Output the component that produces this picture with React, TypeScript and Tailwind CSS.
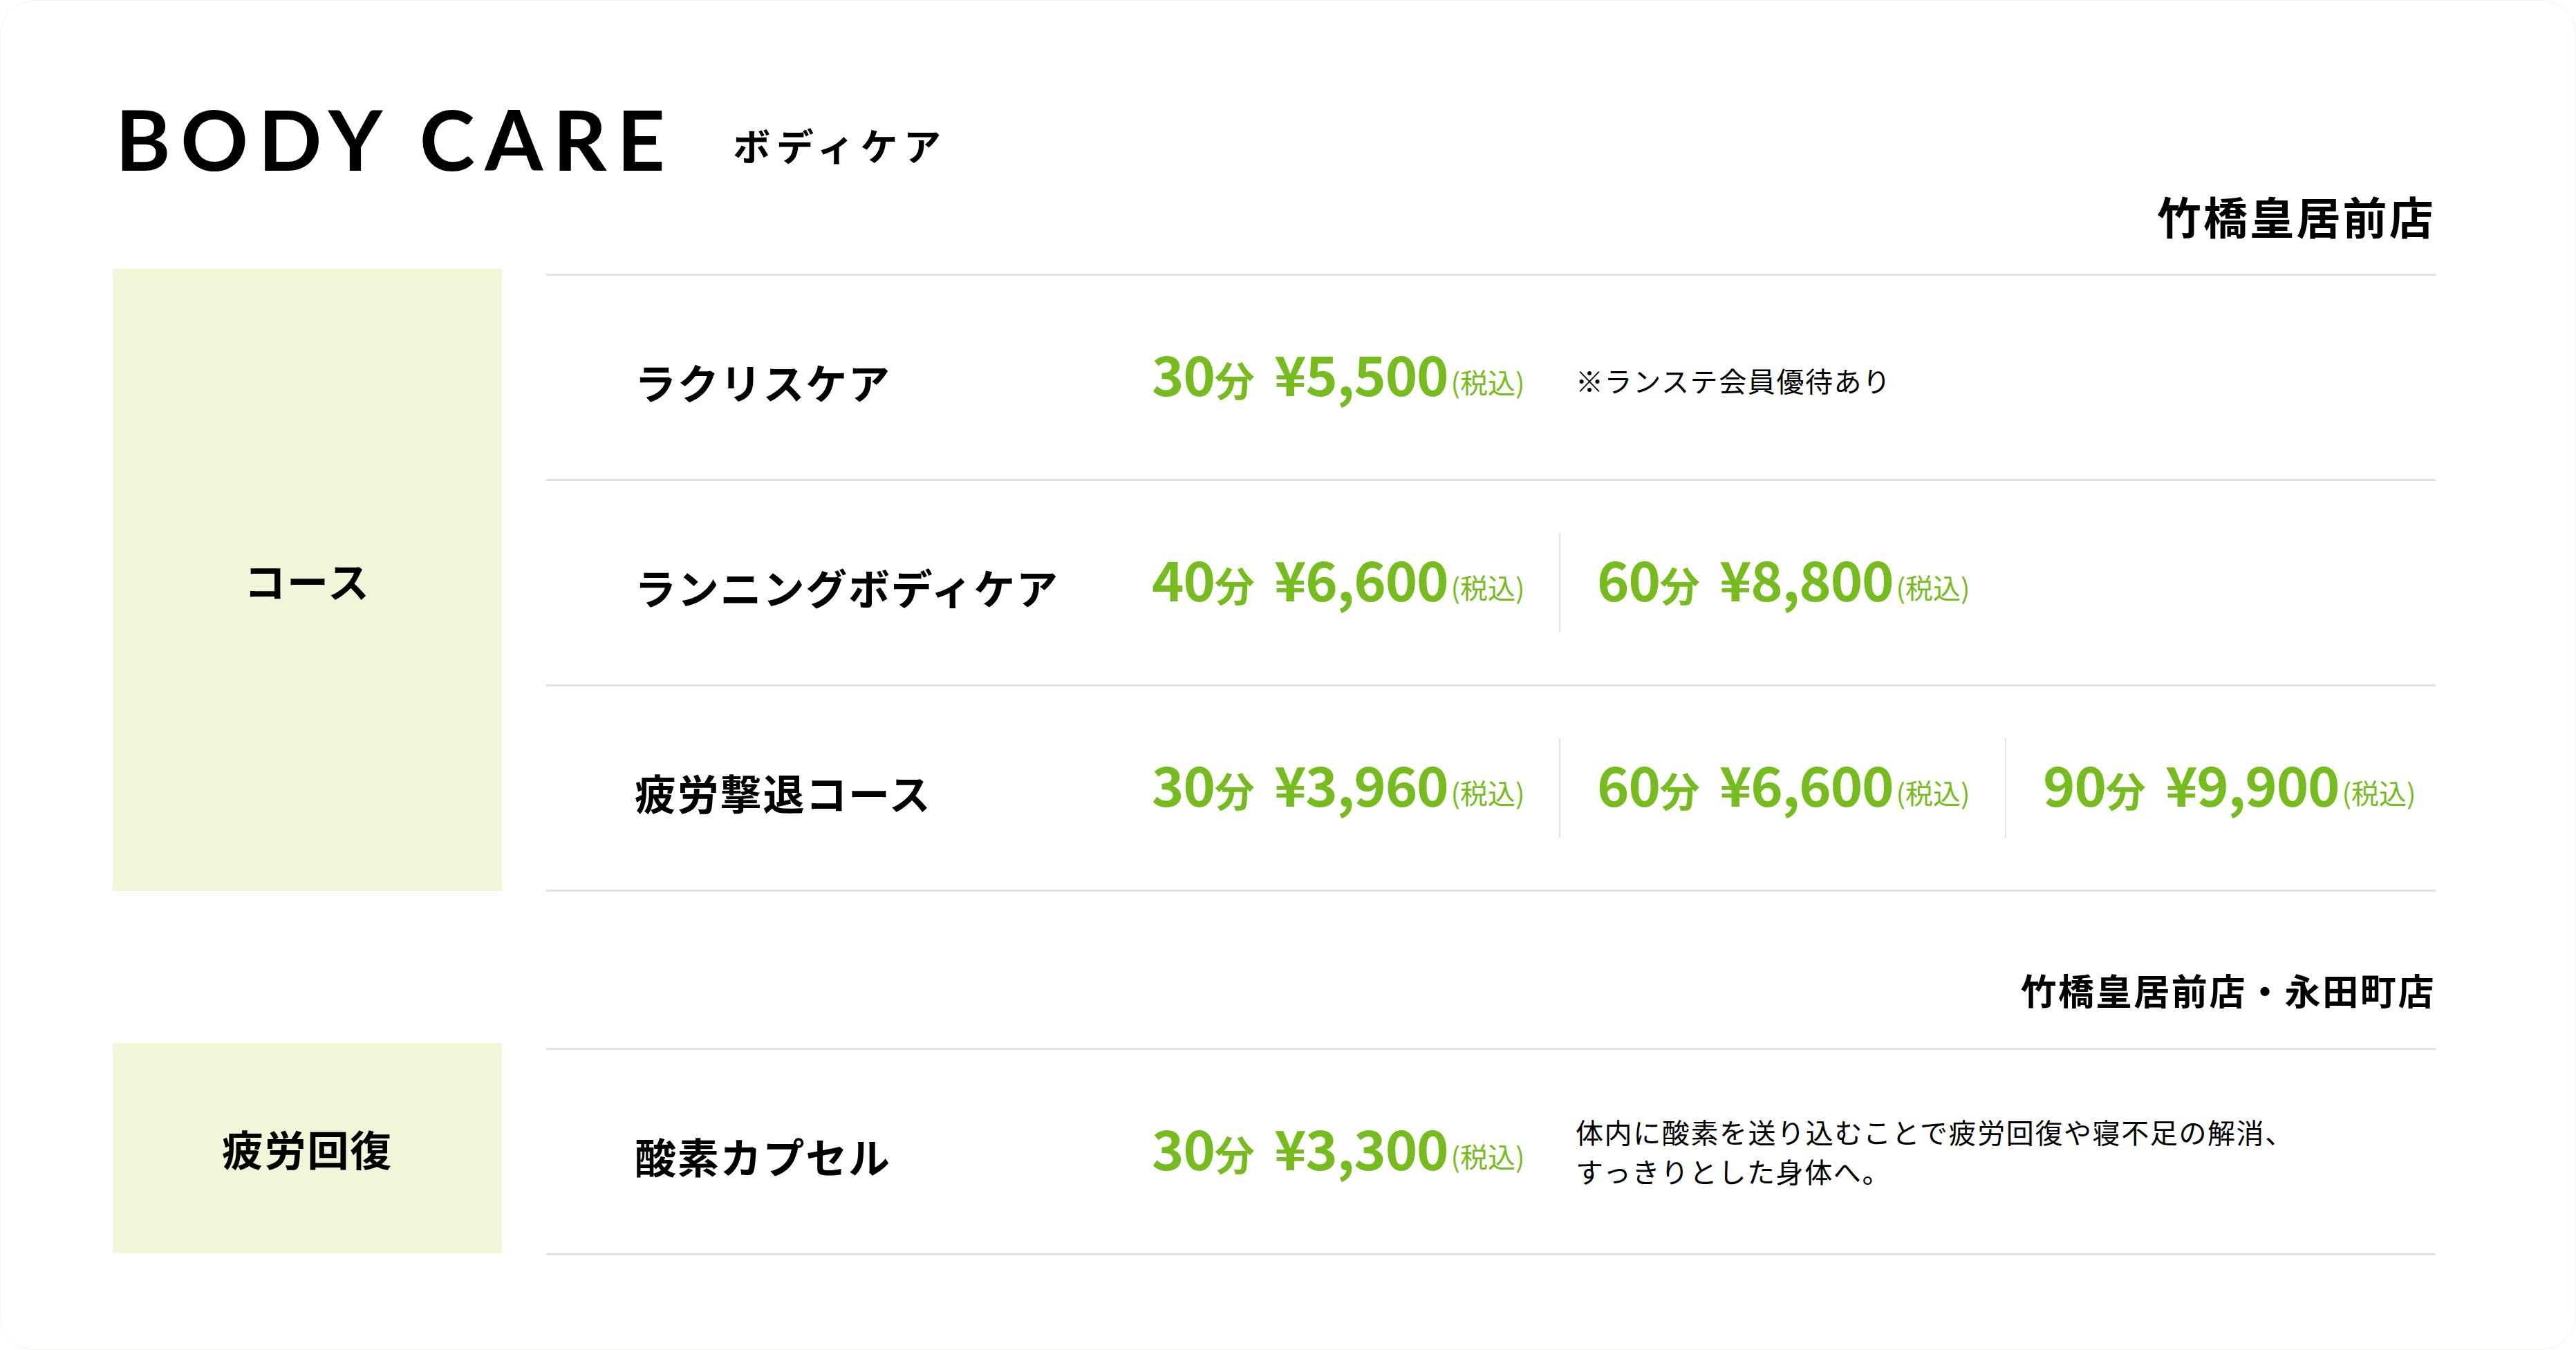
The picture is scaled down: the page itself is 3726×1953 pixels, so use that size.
import React from "react";

type PriceProps = { min: string; yen: string };

// green price: "30分 ¥5,500(税込)"
const Price = ({ min, yen }: PriceProps) => (
  <div className="mb-[16px] flex items-end whitespace-nowrap font-bold text-[#77bc1f]">
    <span className="text-[79px] leading-none tracking-[-0.015em]">{min}</span>
    <span className="mb-[1px] text-[58px] leading-none">分</span>
    <span className="ml-[28px] text-[79px] leading-none tracking-[-0.015em]">¥{yen}</span>
    <span className="mb-[6px] ml-[4px] text-[40px] font-normal leading-none">(税込)</span>
  </div>
);

const Cell = ({ min, yen }: PriceProps) => (
  <div className="flex h-[144px] w-[645px] shrink-0 items-center border-l-2 border-[#e3e3e3] pl-[53px]">
    <Price min={min} yen={yen} />
  </div>
);

const Row = ({ name, children }: { name: string; children: React.ReactNode }) => (
  <div className="flex h-[297px] items-center border-b-[3px] border-[#e0e0e0]">
    <div className="w-[876px] shrink-0 pl-[128px] pt-[12px] text-[60px] font-bold leading-none tracking-[0.03em]">
      {name}
    </div>
    {children}
  </div>
);

export default function App() {
  return (
    <div className="h-[1953px] w-[3726px] bg-white font-['Noto_Sans_CJK_JP',sans-serif] text-black">
      <div className="h-full w-full rounded-[50px] border border-[#f4f4ee] bg-white pl-[162px] pr-[202px] pt-[139px]">
        {/* Title */}
        <div className="flex items-end">
          <h1 className="ml-[4px] font-['Lato',sans-serif] text-[121px] font-bold leading-none tracking-[0.12em]">
            BODY CARE
          </h1>
          <span className="mb-[24px] ml-[84px] text-[54px] font-bold leading-none tracking-[0.16em]">
            ボディケア
          </span>
        </div>

        {/* コース */}
        <p className="mt-[18px] text-right text-[64px] font-bold leading-none tracking-[0.05em]">
          竹橋皇居前店
        </p>
        <div className="mt-[46px] flex items-start">
          <div className="mr-[64px] flex h-[900px] w-[563px] shrink-0 items-center justify-center bg-[#f2f6d9] text-[60px] font-bold leading-none tracking-[0.03em]">
            コース
          </div>
          <div className="mt-[7px] min-w-0 flex-1 border-t-[3px] border-[#e0e0e0]">
            <Row name="ラクリスケア">
              <div className="w-[589px] shrink-0">
                <Price min="30" yen="5,500" />
              </div>
              <p className="shrink-0 pl-[24px] pt-[8px] text-[40px] leading-none tracking-[0.04em]">
                ※ランステ会員優待あり
              </p>
            </Row>
            <Row name="ランニングボディケア">
              <div className="w-[589px] shrink-0">
                <Price min="40" yen="6,600" />
              </div>
              <Cell min="60" yen="8,800" />
            </Row>
            <Row name="疲労撃退コース">
              <div className="w-[589px] shrink-0">
                <Price min="30" yen="3,960" />
              </div>
              <Cell min="60" yen="6,600" />
              <Cell min="90" yen="9,900" />
            </Row>
          </div>
        </div>

        {/* 疲労回復 */}
        <p className="mt-[116px] text-right text-[52px] font-bold leading-none tracking-[0.05em]">
          竹橋皇居前店・永田町店
        </p>
        <div className="mt-[51px] flex items-start">
          <div className="mr-[64px] flex h-[304px] w-[563px] shrink-0 items-center justify-center bg-[#f2f6d9] text-[60px] font-bold leading-none tracking-[0.03em]">
            疲労回復
          </div>
          <div className="mt-[7px] min-w-0 flex-1 border-t-[3px] border-[#e0e0e0]">
            <Row name="酸素カプセル">
              <div className="w-[589px] shrink-0">
                <Price min="30" yen="3,300" />
              </div>
              <p className="shrink-0 pl-[24px] text-[40px] leading-[57px] tracking-[0.04em]">
                体内に酸素を送り込むことで疲労回復や寝不足の解消、
                <br />
                すっきりとした身体へ。
              </p>
            </Row>
          </div>
        </div>
      </div>
    </div>
  );
}
